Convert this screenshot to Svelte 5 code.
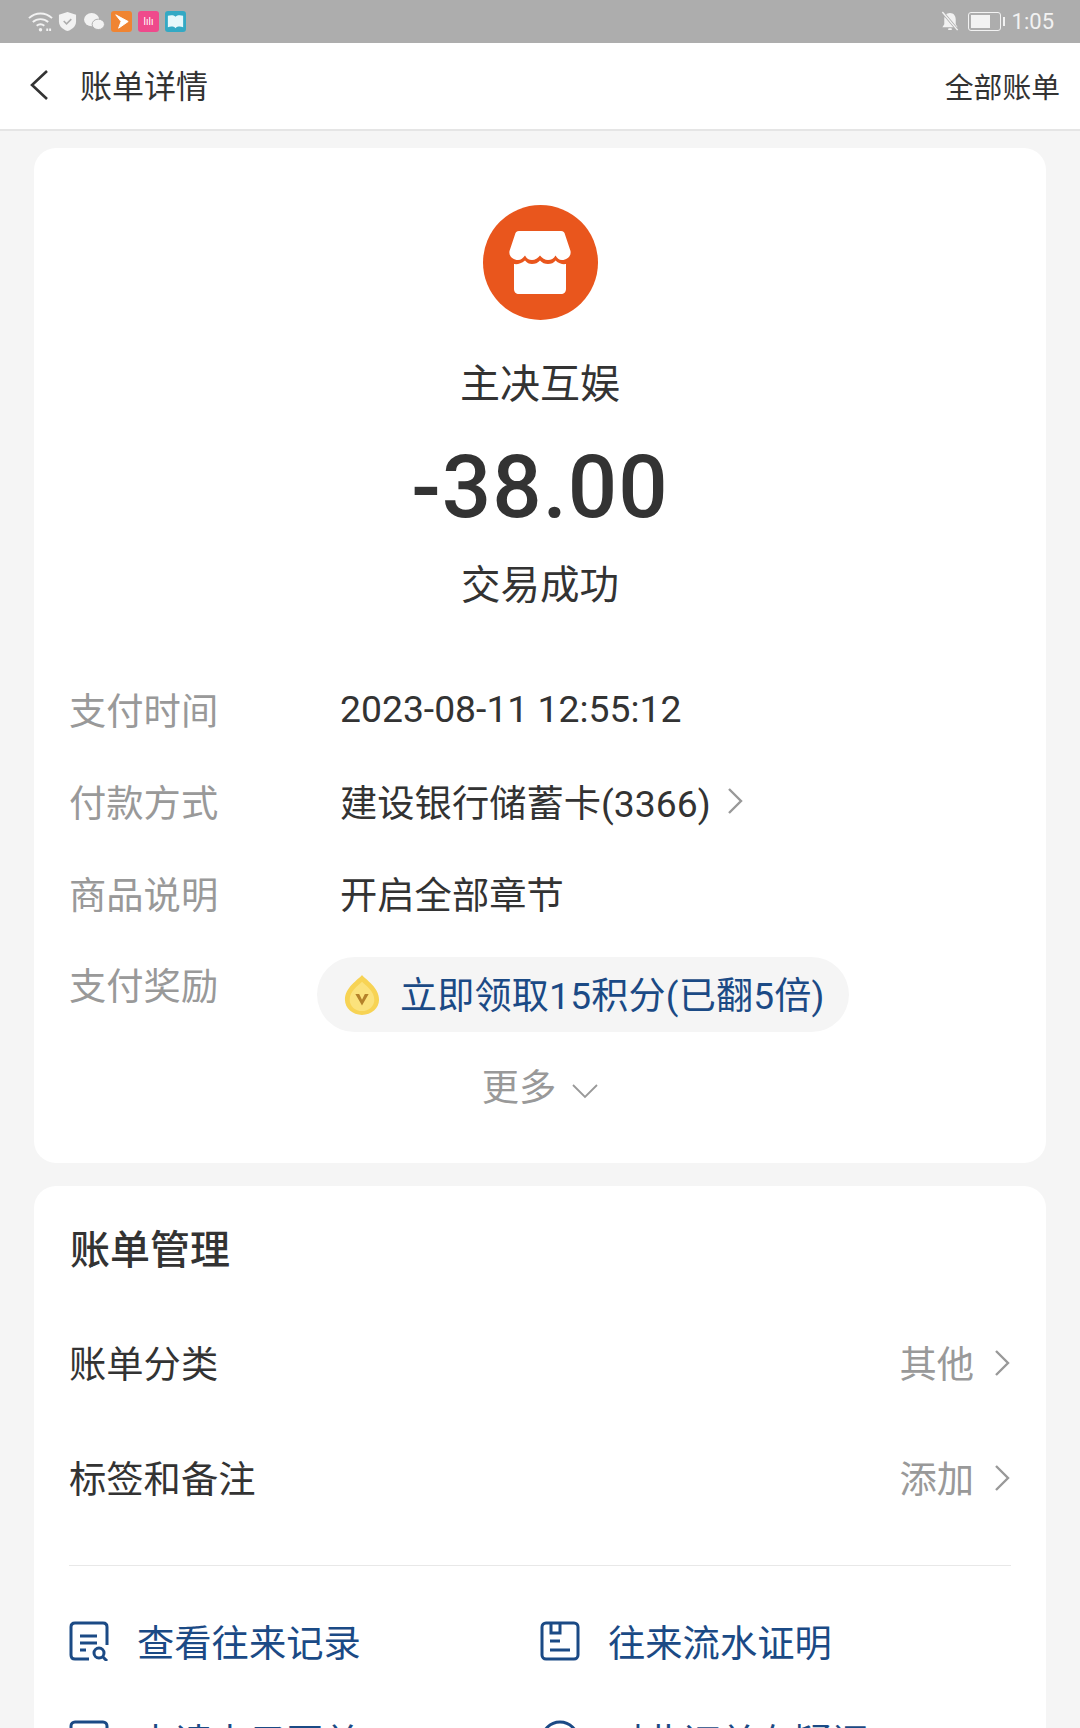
<script>
  const details = [
    { label: "支付时间", value: "2023-08-11 12:55:12" },
    { label: "付款方式", value: "建设银行储蓄卡(3366)", arrow: true },
    { label: "商品说明", value: "开启全部章节" }
  ];
  const manage = [
    { label: "账单分类", value: "其他" },
    { label: "标签和备注", value: "添加" }
  ];
</script>

<div class="page">
  <div class="status">
    <div class="status-left">
      <svg class="s-wifi" viewBox="0 0 26 22" fill="none" stroke="#f2f2f2" stroke-width="2">
        <path d="M1 7c7-6.500 17-6.500 24 0" />
        <path d="M5 11c4.500-4 11.500-4 16 0" />
        <path d="M9 15c2.500-2 5.500-2 8 0" />
        <circle cx="13" cy="19" r="1.800" fill="#f2f2f2" stroke="none" />
        <path d="M19 19h6" stroke-width="2.500" stroke-dasharray="2 1" />
      </svg>
      <svg class="s-shield" viewBox="0 0 20 22">
        <path d="M10 1l9 3v7c0 5-4 8.500-9 10-5-1.500-9-5-9-10V4z" fill="#f2f2f2" />
        <path d="M6 10.500l3 3 5-5" fill="none" stroke="#adadad" stroke-width="1.600" />
      </svg>
      <svg class="s-wechat" viewBox="0 0 22 20" fill="#f2f2f2">
        <ellipse cx="8" cy="8" rx="8" ry="7" />
        <ellipse cx="15" cy="13" rx="6.500" ry="5.500" stroke="#adadad" stroke-width="1" />
      </svg>
      <span class="app app-orange">
        <svg viewBox="0 0 22 22"><path d="M5 4l13 7-10 7 2.500-7z" fill="#fff" stroke="#fff" stroke-linejoin="round" /></svg>
      </span>
      <span class="app app-pink">lılı</span>
      <span class="app app-teal">
        <svg viewBox="0 0 22 22"><path d="M3 5c3-1 6-1 8 1 2-2 5-2 8-1v12c-3-1-6-1-8 1-2-2-5-2-8-1z" fill="#e6f8fb" /></svg>
      </span>
    </div>
    <div class="status-right">
      <svg class="s-bell" viewBox="0 0 20 22" fill="#f2f2f2">
        <path d="M10 2c4 0 6 3 6 7v5l2 3H2l2-3V9c0-4 2-7 6-7z" />
        <rect x="8" y="18" width="4" height="2" rx="1" />
        <path d="M2 1l16 19" stroke="#adadad" stroke-width="3" />
        <path d="M2 1l16 19" stroke="#f2f2f2" stroke-width="1.500" />
      </svg>
      <div class="battery"><div class="battery-fill"></div></div>
      <div class="battery-tip"></div>
      <span class="time">1:05</span>
    </div>
  </div>

  <div class="nav">
    <div class="nav-left">
      <svg class="back" viewBox="0 0 20 32" fill="none" stroke="#333" stroke-width="2.600">
        <path d="M18 2L3 16l15 14" />
      </svg>
      <span class="nav-title">账单详情</span>
    </div>
    <span class="nav-all">全部账单</span>
  </div>

  <div class="cards">
    <section class="card summary">
      <div class="shop">
        <svg viewBox="0 0 62 64" fill="#fff">
          <path d="M10 0H52C54.500 0 55.500 1.500 56 3.500L61.500 20C62.500 25 58 29 53 29 50 29 48 27 46.500 24.500 45 27.500 42 29 39 29 36 29 33 27 31 24.500 29 27 26 29 23 29 20 29 17.500 27.500 16 24.500 14 27 12 29 9 29 4 29-.5 25 .5 20L6 3.500C6.500 1.500 7.500 0 10 0Z" />
          <path d="M5 33C8 33.500 12 33 16 29.500 18 32 20 33 23 33 26 33 29 32 31 29.500 33 32 36 33 39 33 42 33 45 32 46.500 29.500 50 33 54 33.500 57 33V58C57 61 55 63 52 63H10C7 63 5 61 5 58Z" />
        </svg>
      </div>
      <div class="merchant">主决互娱</div>
      <div class="amount">-38.00</div>
      <div class="result">交易成功</div>

      <div class="details">
        {#each details as row}
          <div class="detail">
            <span class="label">{row.label}</span>
            <span class="value">{row.value}</span>
            {#if row.arrow}
              <svg class="arrow small" viewBox="0 0 16 28" fill="none" stroke="#999" stroke-width="2.400">
                <path d="M2 2l12 12L2 26" />
              </svg>
            {/if}
          </div>
        {/each}
        <div class="detail reward">
          <span class="label">支付奖励</span>
          <div class="pill">
            <svg class="coin" viewBox="0 0 38 44">
              <path d="M19 1c4 5 18 13 18 26 0 9-8 16-18 16S1 36 1 27C1 14 15 6 19 1z" fill="#f7d354" />
              <path d="M19 8c4 4 13 10 13 19 0 7-6 12-13 12S6 34 6 27C6 18 15 12 19 8z" fill="#fbe27c" />
              <path d="M12 21h4l3 6 3-6h4l-7 12z" fill="#b5822a" />
            </svg>
            <span class="pill-text">立即领取15积分(已翻5倍)</span>
          </div>
        </div>
      </div>

      <div class="more">
        <span>更多</span>
        <svg viewBox="0 0 26 16" fill="none" stroke="#999" stroke-width="1.800">
          <path d="M1 2l12 12L25 2" />
        </svg>
      </div>
    </section>

    <section class="card manage">
      <h2>账单管理</h2>
      {#each manage as row}
        <div class="manage-row">
          <span class="manage-label">{row.label}</span>
          <span class="manage-value">{row.value}</span>
          <svg class="arrow" viewBox="0 0 16 28" fill="none" stroke="#999" stroke-width="2.400">
            <path d="M2 2l12 12L2 26" />
          </svg>
        </div>
      {/each}
      <div class="divider"></div>
      <div class="links">
        <div class="link">
          <svg viewBox="0 0 40 40" fill="none" stroke="#1b4a85" stroke-width="3">
            <path d="M38 24V6Q38 2 34 2H6Q2 2 2 6V34Q2 38 6 38H20" />
            <path d="M11 15H28M11 22H28M11 29H17" />
            <circle cx="30" cy="32" r="5" />
            <path d="M34 36l4 4" />
          </svg>
          <span>查看往来记录</span>
        </div>
        <div class="link">
          <svg viewBox="0 0 40 40" fill="none" stroke="#1b4a85" stroke-width="3">
            <rect x="2" y="2" width="36" height="36" rx="4" />
            <path d="M11 2V12H20V2" />
            <path d="M10 20H20M10 29H30" />
          </svg>
          <span>往来流水证明</span>
        </div>
        <div class="link">
          <svg viewBox="0 0 40 40" fill="none" stroke="#1b4a85" stroke-width="3">
            <rect x="2" y="2" width="36" height="36" rx="4" />
          </svg>
          <span>申请电子回单</span>
        </div>
        <div class="link">
          <svg viewBox="0 0 40 40" fill="none" stroke="#1b4a85" stroke-width="3">
            <circle cx="20" cy="20" r="18" />
          </svg>
          <span>对此订单有疑问</span>
        </div>
      </div>
    </section>
  </div>
</div>

<style>
  :global(body) {
    margin: 0;
  }

  .page {
    width: 1080px;
    height: 1728px;
    overflow: hidden;
    background: #f5f5f5;
    color: #333;
    font-family: Roboto, "Noto Sans CJK SC", sans-serif;
  }

  .status {
    height: 43px;
    background: #adadad;
    display: flex;
    justify-content: space-between;
    align-items: center;
    padding: 0 26px 0 28px;
  }

  .status-left,
  .status-right {
    display: flex;
    align-items: center;
  }

  .s-wifi {
    width: 25px;
    height: 22px;
    margin-right: 5px;
  }

  .s-shield {
    width: 19px;
    height: 21px;
    margin-right: 7px;
  }

  .s-wechat {
    width: 21px;
    height: 19px;
  }

  .app {
    width: 21px;
    height: 21px;
    margin-left: 6px;
    border-radius: 3px;
    display: flex;
    align-items: center;
    justify-content: center;
    font-size: 10px;
    color: #fff;
  }

  .app svg {
    width: 21px;
    height: 21px;
  }

  .app-orange {
    background: #f08432;
  }

  .app-pink {
    background: #ef4a8c;
  }

  .app-teal {
    background: #33a9c4;
  }

  .s-bell {
    width: 20px;
    height: 21px;
    margin-right: 8px;
  }

  .battery {
    width: 33px;
    height: 19px;
    box-sizing: border-box;
    border: 1.500px solid #f2f2f2;
    border-radius: 3px;
    padding: 2px;
  }

  .battery-fill {
    width: 19px;
    height: 100%;
    background: #f2f2f2;
  }

  .battery-tip {
    width: 2px;
    height: 9px;
    margin-left: 2px;
    background: #f2f2f2;
  }

  .time {
    margin-left: 7px;
    font-size: 22px;
    color: #f2f2f2;
  }

  .nav {
    height: 88px;
    box-sizing: border-box;
    background: #fff;
    border-bottom: 2px solid #e5e5e5;
    display: flex;
    justify-content: space-between;
    align-items: center;
    padding: 0 20px 4px 30px;
  }

  .nav-left {
    display: flex;
    align-items: center;
  }

  .back {
    width: 20px;
    height: 32px;
    margin: 2px 31px 0 -1px;
  }

  .nav-title {
    font-size: 32px;
  }

  .nav-all {
    margin-top: 2px;
    font-size: 28.800px;
  }

  .cards {
    padding: 17px 34px 0;
    display: flex;
    flex-direction: column;
    gap: 23px;
  }

  .card {
    background: #fff;
    border-radius: 22px;
  }

  .summary {
    height: 1015px;
    box-sizing: border-box;
    padding: 57px 36px 0;
    display: flex;
    flex-direction: column;
    align-items: center;
  }

  .shop {
    width: 115px;
    height: 115px;
    border-radius: 50%;
    background: #e9561d;
    display: flex;
    align-items: center;
    justify-content: center;
  }

  .shop svg {
    width: 62px;
    height: 64px;
    margin-top: 1px;
  }

  .merchant {
    margin-top: 42px;
    font-size: 40px;
    line-height: 46px;
  }

  .amount {
    margin-top: 29px;
    font-size: 87px;
    font-weight: 500;
    line-height: 100px;
    letter-spacing: 1px;
  }

  .result {
    margin-top: 26px;
    font-size: 39.500px;
    line-height: 46px;
  }

  .details {
    align-self: stretch;
    margin-top: 54px;
  }

  .detail {
    height: 92px;
    display: flex;
    align-items: center;
    font-size: 37.300px;
  }

  .label {
    width: 270px;
    color: #999;
    flex: none;
    margin-left: -1px;
    margin-right: 1px;
  }

  .arrow {
    width: 16px;
    height: 28px;
  }

  .arrow.small {
    margin-left: 16px;
  }

  .reward {
    align-items: flex-start;
    padding-top: 18px;
    box-sizing: border-box;
  }

  .pill {
    height: 75px;
    box-sizing: border-box;
    margin-left: -23px;
    padding: 0 24px 0 27px;
    border-radius: 38px;
    background: #f5f5f5;
    display: flex;
    align-items: center;
    color: #1b4a85;
  }

  .coin {
    width: 36px;
    height: 42px;
    margin-right: 20px;
  }

  .pill-text {
    margin-top: -3px;
    font-size: 37.100px;
    letter-spacing: 0.2px;
  }

  .more {
    margin-top: 27px;
    display: flex;
    align-items: center;
    color: #999;
    font-size: 37.300px;
  }

  .more svg {
    width: 26px;
    height: 16px;
    margin: 12px 0 0 16px;
  }

  .manage {
    padding: 0 36px;
    height: 700px;
  }

  h2 {
    margin: 0;
    padding-top: 41px;
    font-size: 40px;
    font-weight: 500;
    line-height: 48px;
  }

  .manage-row {
    height: 115px;
    display: flex;
    align-items: center;
    font-size: 37.300px;
  }

  .manage-row .arrow {
    margin-top: 2px;
  }

  h2 + .manage-row {
    margin-top: 29px;
  }

  .manage-label {
    flex: 1;
    margin-left: -1px;
  }

  .manage-value {
    color: #999;
    margin-right: 20px;
  }

  .divider {
    height: 1px;
    margin: 31px -1px 0;
    background: #e8e8e8;
  }

  .links {
    margin-top: 47px;
    display: grid;
    grid-template-columns: 471px 1fr;
    row-gap: 44px;
    color: #1b4a85;
    font-size: 37.300px;
  }

  .link {
    height: 55px;
    display: flex;
    align-items: center;
  }

  .link svg {
    width: 40px;
    height: 40px;
    margin: 0 28px 0 -1px;
    flex: none;
  }
</style>
